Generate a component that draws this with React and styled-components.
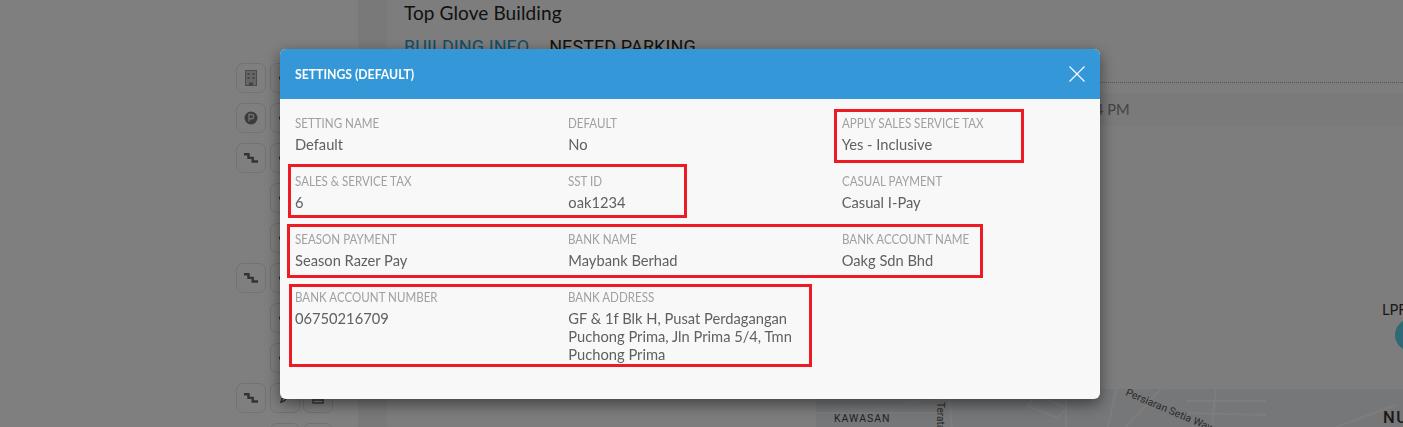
import React from "react"
import styled, { createGlobalStyle } from "styled-components"

const GlobalStyle = createGlobalStyle`
  html, body {
    margin: 0;
    height: 427px;
    overflow: hidden;
    background: #fff;
    font-family: Lato, "Liberation Sans", sans-serif;
  }
`

const Page = styled.div`
  display: flex;
  height: 427px;
  overflow: hidden;
`

const Sidebar = styled.aside`
  width: 358px;
  flex: none;
  box-sizing: border-box;
  padding: 63px 0 0 236px;
  background: #fff;
`

const ToolGrid = styled.div`
  display: grid;
  grid-template-columns: repeat(3, 30px);
  grid-auto-rows: 30px;
  column-gap: 3.5px;
  row-gap: 10px;
`

const ToolButton = styled.div`
  display: flex;
  align-items: center;
  justify-content: center;
  box-sizing: border-box;
  border: 1px solid #e4e4e4;
  border-radius: 7px;
  color: #777;
  visibility: ${(p) => (p.$empty ? "hidden" : "visible")};
`

const Gutter = styled.div`
  width: 29px;
  flex: none;
  background: #f3f3f3;
`

const Main = styled.main`
  flex: 1;
  display: flex;
  flex-direction: column;
  min-width: 0;
  background: #fbfbfb;
`

const Title = styled.h1`
  margin: 0;
  padding-left: 17px;
  font-size: 19px;
  font-weight: 400;
  line-height: 26px;
  letter-spacing: 0.1px;
  color: #222;
`

const Tabs = styled.div`
  display: flex;
  gap: 20px;
  box-sizing: content-box;
  height: 47px;
  padding: 9px 0 0 17px;
  border-bottom: 1px dotted #aaa;
`

const Tab = styled.span`
  font-family: Roboto, sans-serif;
  font-size: 18px;
  line-height: 24px;
  letter-spacing: 0.1px;
  color: ${(p) => (p.$active ? "#1f9bd1" : "#222")};
`

const TimeRow = styled.div`
  height: 33px;
  margin-top: 10px;
  padding-left: 708px;
  background: #f4f4f4;
  font-size: 14.7px;
  line-height: 33px;
  color: #888;
`

const Diagram = styled.div`
  position: relative;
  flex: 1;
`

const NodeLabel = styled.span`
  position: absolute;
  left: 995px;
  top: 174px;
  font-size: 14.7px;
  line-height: 18px;
  color: #333;
`

const NodeDot = styled.span`
  position: absolute;
  left: 1008px;
  top: 193px;
  width: 32px;
  height: 32px;
  border-radius: 50%;
  background: #5cd3ee;
`

const MapRow = styled.div`
  display: flex;
  justify-content: flex-end;
  height: 38px;
  flex: none;
`

const MapSvg = styled.svg`
  display: block;
  width: 587px;
  height: 38px;
  background: #edeff2;
`

const Overlay = styled.div`
  position: fixed;
  inset: 0;
  background: rgba(0, 0, 0, 0.5);
`

const Modal = styled.section`
  position: relative;
  width: 820px;
  margin: 49px 0 0 280px;
  border-radius: 6px;
  background: #f8f8f8;
  box-shadow: 0 5px 15px rgba(0, 0, 0, 0.5);
`

const ModalHeader = styled.header`
  display: flex;
  align-items: center;
  justify-content: space-between;
  height: 50px;
  box-sizing: border-box;
  padding: 0 15px;
  border-radius: 6px 6px 0 0;
  background: #3498d8;
  color: #fff;
`

const ModalTitle = styled.h2`
  margin: 0;
  font-size: 13px;
  font-weight: 700;
  transform: scaleX(0.94);
  transform-origin: left center;
`

const CloseButton = styled.svg`
  width: 16px;
  height: 16px;
  stroke: #fff;
  stroke-width: 1.1;
  fill: none;
`

const Fields = styled.div`
  display: grid;
  grid-template-columns: repeat(3, 273.33px);
  row-gap: 19px;
  padding: 15px 0 36px 15px;
`

const Field = styled.div`
  display: flex;
  flex-direction: column;
  gap: 3px;
  padding-right: 20px;
`

const Label = styled.div`
  font-size: 13px;
  line-height: 18px;
  color: #a0a0a0;
  text-transform: uppercase;
  white-space: nowrap;
  transform: scaleX(0.89);
  transform-origin: left center;
`

const Value = styled.div`
  font-size: 14.7px;
  line-height: 18px;
  color: #606060;
`

const Mark = styled.div`
  position: absolute;
  left: ${(p) => p.$x}px;
  top: ${(p) => p.$y}px;
  width: ${(p) => p.$w}px;
  height: ${(p) => p.$h}px;
  box-sizing: border-box;
  border: 3px solid #ed1c24;
  pointer-events: none;
`

const fields = [
  ["Setting Name", "Default"],
  ["Default", "No"],
  ["Apply Sales Service Tax", "Yes - Inclusive"],
  ["Sales & Service Tax", "6"],
  ["SST ID", "oak1234"],
  ["Casual Payment", "Casual I-Pay"],
  ["Season Payment", "Season Razer Pay"],
  ["Bank Name", "Maybank Berhad"],
  ["Bank Account Name", "Oakg Sdn Bhd"],
  ["Bank Account Number", "06750216709"],
  ["Bank Address", "GF & 1f Blk H, Pusat Perdagangan Puchong Prima, Jln Prima 5/4, Tmn Puchong Prima"],
]

const marks = [
  { x: 554, y: 60, w: 190, h: 54 },
  { x: 8, y: 115, w: 399, h: 54 },
  { x: 7, y: 175, w: 696, h: 54 },
  { x: 9, y: 235, w: 523, h: 83 },
]

const Building = () => (
  <svg width="14" height="16" viewBox="0 0 14 16">
    <rect x="1.5" y="0.5" width="11" height="15" fill="#ccc" stroke="#999" />
    <path d="M3.5 3h2v2h-2zM8.5 3h2v2h-2zM3.5 7h2v2h-2zM8.5 7h2v2h-2zM5 12.5h4v3H5z" fill="#888" />
  </svg>
)

const Parking = () => (
  <svg width="14" height="14" viewBox="0 0 14 14">
    <circle cx="7" cy="7" r="6.5" fill="#777" />
    <path d="M5 10.5V3.5h2.6a2.1 2.1 0 0 1 0 4.2H5" fill="none" stroke="#ddd" strokeWidth="1.4" />
  </svg>
)

const Stairs = () => (
  <svg width="14" height="11" viewBox="0 0 14 11">
    <path d="M0 1.3h4.5v3.6h4.2v3.6H14" fill="none" stroke="#666" strokeWidth="2.4" />
  </svg>
)

const Glyph = () => (
  <svg width="12" height="12" viewBox="0 0 12 12">
    <rect x="0" y="4.5" width="12" height="3" fill="#666" />
  </svg>
)

const Pen = () => (
  <svg width="12" height="12" viewBox="0 0 12 12">
    <path d="M2 10l1-3 5-5 2 2-5 5z" fill="none" stroke="#666" strokeWidth="1.5" />
  </svg>
)

const Box = () => (
  <svg width="12" height="12" viewBox="0 0 12 12">
    <rect x="1" y="2" width="10" height="9" fill="none" stroke="#666" strokeWidth="1.4" />
    <path d="M1 8h10" stroke="#666" strokeWidth="1.4" />
  </svg>
)

const tools = [
  [<Building />, <Glyph />, <Glyph />],
  [<Parking />, <Glyph />, <Glyph />],
  [<Stairs />, <Glyph />, <Glyph />],
  [null, <Glyph />, <Glyph />],
  [null, <Glyph />, <Glyph />],
  [<Stairs />, <Glyph />, <Glyph />],
  [null, <Glyph />, <Glyph />],
  [null, <Glyph />, <Glyph />],
  [<Stairs />, <Pen />, <Box />],
  [null, <Glyph />, <Glyph />],
]

const App = () => {
  return (
    <>
      <GlobalStyle />
      <Page>
        <Sidebar>
          <ToolGrid>
            {tools.flat().map((icon, i) => (
              <ToolButton key={i} $empty={!icon}>{icon}</ToolButton>
            ))}
          </ToolGrid>
        </Sidebar>
        <Gutter />
        <Main>
          <Title>Top Glove Building</Title>
          <Tabs>
            <Tab $active>BUILDING INFO</Tab>
            <Tab>NESTED PARKING</Tab>
          </Tabs>
          <TimeRow>4 PM</TimeRow>
          <Diagram>
            <NodeLabel>LPR</NodeLabel>
            <NodeDot />
          </Diagram>
          <MapRow>
            <MapSvg viewBox="0 0 587 38">
              <g fill="none" stroke="#fafafa" strokeWidth="2">
                <path d="M0 12h120M0 24h125M90 14l40-4M132 0l4 38" />
                <path d="M220 5l30 14-8 10-30-12zM250 0v38M300 0l-8 38M345 0l-35 38M400 0l-4 38M520 38l60-22" />
                <path d="M370 12h80M370 24l80 2" />
              </g>
              <text x="18" y="33" fontSize="10.5" letterSpacing="1" fill="#444" fontFamily="Roboto">KAWASAN</text>
              <text x="10" y="46" fontSize="10.5" letterSpacing="1" fill="#444" fontFamily="Roboto">PERUSAHAAN</text>
              <text x="121" y="13" fontSize="10" fill="#555" fontFamily="Roboto" transform="rotate(90 121 13)">Terata</text>
              <text x="309" y="6" fontSize="10.5" fill="#555" fontFamily="Roboto" transform="rotate(23 309 6)">Persiaran Setia Wawasan</text>
              <text x="567" y="33.5" fontSize="16.5" fontWeight="500" letterSpacing="1.5" fill="#333" fontFamily="Roboto">NU</text>
            </MapSvg>
          </MapRow>
        </Main>
      </Page>
      <Overlay>
        <Modal>
          <ModalHeader>
            <ModalTitle>SETTINGS (DEFAULT)</ModalTitle>
            <CloseButton viewBox="0 0 16 16">
              <path d="M0.5 0.5l15 15M15.5 0.5l-15 15" />
            </CloseButton>
          </ModalHeader>
          <Fields>
            {fields.map(([label, value]) => (
              <Field key={label}>
                <Label>{label}</Label>
                <Value>{value}</Value>
              </Field>
            ))}
          </Fields>
          {marks.map((m, i) => (
            <Mark key={i} $x={m.x} $y={m.y} $w={m.w} $h={m.h} />
          ))}
        </Modal>
      </Overlay>
    </>
  )
}

export default App
